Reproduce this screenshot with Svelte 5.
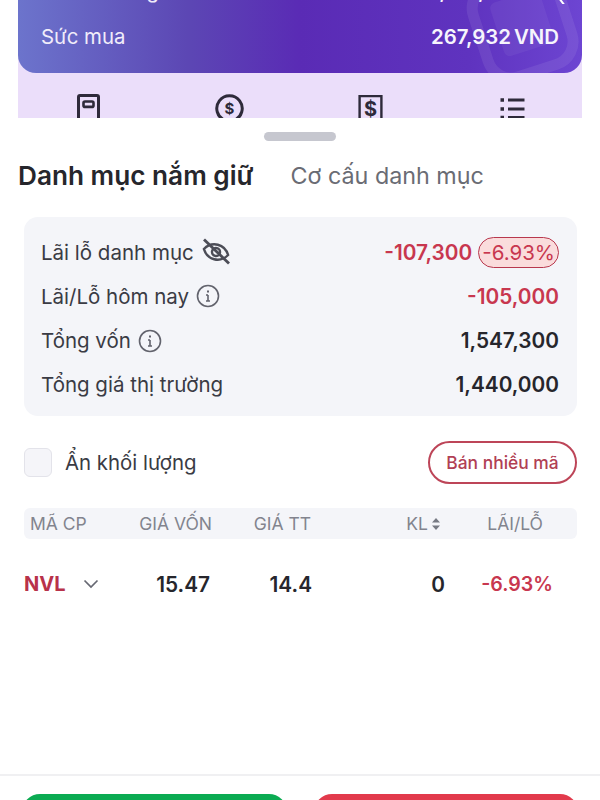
<script>
	const shortcuts = ['wallet', 'coin', 'bill', 'list'];

	const summary = [
		{ label: 'Lãi/Lỗ hôm nay', value: '-105,000', info: true, loss: true },
		{ label: 'Tổng vốn', value: '1,547,300', info: true },
		{ label: 'Tổng giá thị trường', value: '1,440,000' }
	];

	const columns = ['GIÁ VỐN', 'GIÁ TT'];
</script>

<div class="page">
	<div class="top">
		<div class="card">
			<svg class="mark" viewBox="0 0 120 90" fill="none" stroke="#fff" stroke-opacity="0.08">
				<rect x="16" y="-6" width="88" height="96" rx="24" stroke-width="11" transform="rotate(-18 60 40)" />
				<rect x="34" y="12" width="52" height="56" rx="6" fill="#fff" fill-opacity="0.05" stroke="none" transform="rotate(-18 60 40)" />
			</svg>
			<div class="card-row clipped">
				<span>Tài sản ròng</span>
				<span class="clipped-right">
					<b>1,715,932</b>
					<svg width="24" height="26" viewBox="0 0 24 26" fill="none" stroke="#fff" stroke-width="2"><path d="M4 4l18 24" /></svg>
				</span>
			</div>
			<div class="card-row">
				<span>Sức mua</span>
				<b class="cash">267,932<i>VND</i></b>
			</div>
		</div>

		<div class="shortcuts">
			{#each shortcuts as name}
				<div class="shortcut">
					<svg width="32" height="32" viewBox="0 0 32 32" fill="none" stroke="#2e2a3a" stroke-width="3">
						{#if name === 'wallet'}
							<rect x="5.500" y="1.500" width="20" height="26" rx="1.500" />
							<rect x="10.500" y="7.500" width="10" height="5.400" rx="1.500" stroke-width="2.600" />
						{:else if name === 'coin'}
							<path d="M11 26.300a12.700 12.700 0 1 1 9 0" />
							<text x="15.500" y="19.500" text-anchor="middle" class="dollar">$</text>
						{:else if name === 'bill'}
							<path d="M4.600 28V2.100h21.800V28" stroke-width="2.400" />
							<text x="15.500" y="22" text-anchor="middle" class="dollar big">$</text>
						{:else}
							<path d="M12 6h16.500M12 15h16.500M12 23.500h16.500" />
							<path d="M4.500 6H8M4.500 15H8M4.500 23.500H8" stroke-width="3.400" />
						{/if}
					</svg>
				</div>
			{/each}
		</div>
	</div>

	<div class="sheet">
		<div class="handle"></div>

		<div class="tabs">
			<span class="tab active">Danh mục nắm giữ</span>
			<span class="tab">Cơ cấu danh mục</span>
		</div>

		<section class="summary">
			<div class="row">
				<span class="label">
					Lãi lỗ danh mục
					<svg width="30" height="30" viewBox="0 0 30 30" fill="none" stroke="#4c4d57" stroke-width="2.400">
						<g transform="rotate(14 15 15)">
							<path d="M2.500 15c3-5 7-7.500 12.500-7.500s9.500 2.500 12.500 7.500c-3 5-7 7.500-12.500 7.500s-9.500-2.500-12.500-7.500z" />
							<circle cx="15" cy="15" r="4" />
						</g>
						<path d="M3 2.500l25 24" stroke-width="2.800" />
					</svg>
				</span>
				<span class="value loss first">
					-107,300
					<em>-6.93%</em>
				</span>
			</div>
			{#each summary as item}
				<div class="row">
					<span class="label">
						{item.label}
						{#if item.info}
							<svg width="24" height="24" viewBox="0 0 24 24" fill="none" stroke="#62636d" stroke-width="1.600">
								<circle cx="12" cy="12" r="10.500" />
								<path d="M12 11v6M10 11h2M10 17h4" />
								<path d="M12 6.500v2" stroke-width="2" />
							</svg>
						{/if}
					</span>
					<span class="value" class:loss={item.loss}>{item.value}</span>
				</div>
			{/each}
		</section>

		<div class="actions">
			<label class="hide">
				<span class="box"></span>
				Ẩn khối lượng
			</label>
			<button class="sell">Bán nhiều mã</button>
		</div>

		<div class="table-head">
			<span class="code">MÃ CP</span>
			{#each columns as column}
				<span>{column}</span>
			{/each}
			<span class="sort">
				KL
				<svg width="10" height="12" viewBox="0 0 10 12" fill="#777a84"><path d="M5 0l4 4.500H1zM5 12L1 7.500h8z" /></svg>
			</span>
			<span>LÃI/LỖ</span>
		</div>

		<div class="table-row">
			<span class="code">
				<b>NVL</b>
				<svg width="16" height="10" viewBox="0 0 16 10" fill="none" stroke="#666872" stroke-width="1.700"><path d="M1.500 1.500L8 8l6.500-6.500" /></svg>
			</span>
			<span>15.47</span>
			<span>14.4</span>
			<span>0</span>
			<span class="loss pct">-6.93%</span>
		</div>

		<div class="footer">
			<div class="trade buy"></div>
			<div class="trade sell-trade"></div>
		</div>
	</div>
</div>

<style>
	:global(body) {
		margin: 0;
		background: #fff;
		font-family: Inter, 'Noto Sans', sans-serif;
	}

	.page {
		height: 800px;
		overflow: hidden;
		display: flex;
		flex-direction: column;
	}

	.top {
		height: 118px;
		margin: 0 18px;
		flex: none;
		display: flex;
		flex-direction: column;
		background: #ebdefa;
	}

	.card {
		height: 73px;
		position: relative;
		overflow: hidden;
		flex: none;
		box-sizing: border-box;
		padding: 0 23px;
		border-radius: 0 0 18px 18px;
		background: linear-gradient(90deg, #6c74cc 0%, #5c47b4 30%, #5a2bb5 50%, #5f33bf 80%, #6d45d2 100%);
		color: #f0ecfa;
	}

	.mark {
		position: absolute;
		right: 0;
		bottom: 0;
		width: 120px;
		height: 90px;
	}

	.card-row {
		position: relative;
		height: 37px;
		display: flex;
		align-items: center;
		justify-content: space-between;
		font-size: 20.400px;
	}

	.card-row b {
		font-weight: 600;
		color: #f6f4fc;
	}

	.cash i {
		margin-left: 3px;
		font-style: normal;
	}

	.clipped {
		margin: -28px 0 9px;
	}

	.clipped-right {
		display: flex;
		align-items: center;
		gap: 20px;
		margin-right: -8px;
	}

	.shortcuts {
		flex: 1;
		display: grid;
		grid-template-columns: repeat(4, 1fr);
		overflow: hidden;
	}

	.shortcut {
		padding-top: 21px;
		display: flex;
		justify-content: center;
	}

	.dollar {
		font-size: 15px;
		font-weight: 700;
		fill: #2e2a3a;
		stroke: none;
	}

	.dollar.big {
		font-size: 20px;
	}

	.sheet {
		flex: 1;
		display: flex;
		flex-direction: column;
		background: #fff;
	}

	.handle {
		width: 72px;
		height: 9px;
		margin: 14px auto 0;
		border-radius: 5px;
		background: #c6c7cf;
	}

	.tabs {
		display: flex;
		align-items: center;
		gap: 37px;
		height: 32px;
		margin: 18px 18px 0;
	}

	.tab {
		font-size: 23.300px;
		color: #6a6c74;
		white-space: nowrap;
	}

	.tab.active {
		font-size: 26.200px;
		font-weight: 600;
		color: #26262c;
	}

	.summary {
		margin: 26px 23px 0 24px;
		height: 199px;
		box-sizing: border-box;
		padding: 13px 18px 9px 17px;
		display: flex;
		flex-direction: column;
		justify-content: space-between;
		border-radius: 14px;
		background: #f4f5f9;
	}

	.row {
		height: 44px;
		display: flex;
		align-items: center;
		justify-content: space-between;
	}

	.label {
		display: flex;
		align-items: center;
		gap: 7px;
		font-size: 20.500px;
		color: #3a3b44;
	}

	.value {
		display: flex;
		align-items: center;
		gap: 6px;
		font-size: 20.800px;
		font-weight: 600;
		color: #26262c;
	}

	.loss {
		color: #c8374f;
	}

	.value em {
		font-style: normal;
		font-weight: 400;
		font-size: 20.500px;
		padding: 2px 3px;
		line-height: 25px;
		border: 1.500px solid #b8384e;
		border-radius: 16px;
		background: #fadcdc;
	}

	.actions {
		display: flex;
		align-items: center;
		justify-content: space-between;
		height: 43px;
		margin: 25px 23px 0 24px;
	}

	.hide {
		display: flex;
		align-items: center;
		gap: 13px;
		font-size: 20.400px;
		color: #3a3b44;
	}

	.box {
		width: 26px;
		height: 27px;
		border: 1.500px solid #e3e3ea;
		border-radius: 6px;
		background: #f5f5f9;
	}

	.sell {
		width: 149px;
		height: 43px;
		padding: 0;
		border: 2px solid #bd4558;
		border-radius: 22px;
		background: #fff;
		font: 500 17.400px Inter, sans-serif;
		color: #b13f54;
	}

	.table-head,
	.table-row {
		display: grid;
		margin: 0 23px 0 24px;
		align-items: center;
		text-align: right;
	}

	.table-head {
		grid-template-columns: 100px 88px 99px 130px 102px;
		height: 31px;
		margin-top: 24px;
		border-radius: 6px;
		background: #f4f5f9;
		font-size: 17.500px;
		color: #82848e;
	}

	.table-head .code {
		padding-left: 6px;
		text-align: left;
	}

	.sort {
		display: flex;
		align-items: center;
		justify-content: flex-end;
		gap: 3px;
	}

	.table-row {
		grid-template-columns: 100px 86px 102px 133px 108px;
		height: 30px;
		margin-top: 30px;
		font-size: 20.800px;
		font-weight: 600;
		color: #26262c;
	}

	.table-row .code {
		display: flex;
		align-items: center;
		gap: 18px;
		text-align: left;
	}

	.table-row b {
		font-size: 20px;
		color: #b8324a;
		font-weight: 700;
	}

	.table-row .pct {
		font-size: 19.600px;
		color: #c8374f;
	}

	.footer {
		margin-top: auto;
		height: 26px;
		flex: none;
		box-sizing: border-box;
		padding: 18px 22px 0;
		display: grid;
		grid-template-columns: 265px 264px;
		justify-content: space-between;
		border-top: 2px solid #f0f0f2;
	}

	.trade {
		height: 40px;
		border-radius: 18px;
	}

	.buy {
		background: #0bab52;
	}

	.sell-trade {
		background: #e23a4c;
	}
</style>
